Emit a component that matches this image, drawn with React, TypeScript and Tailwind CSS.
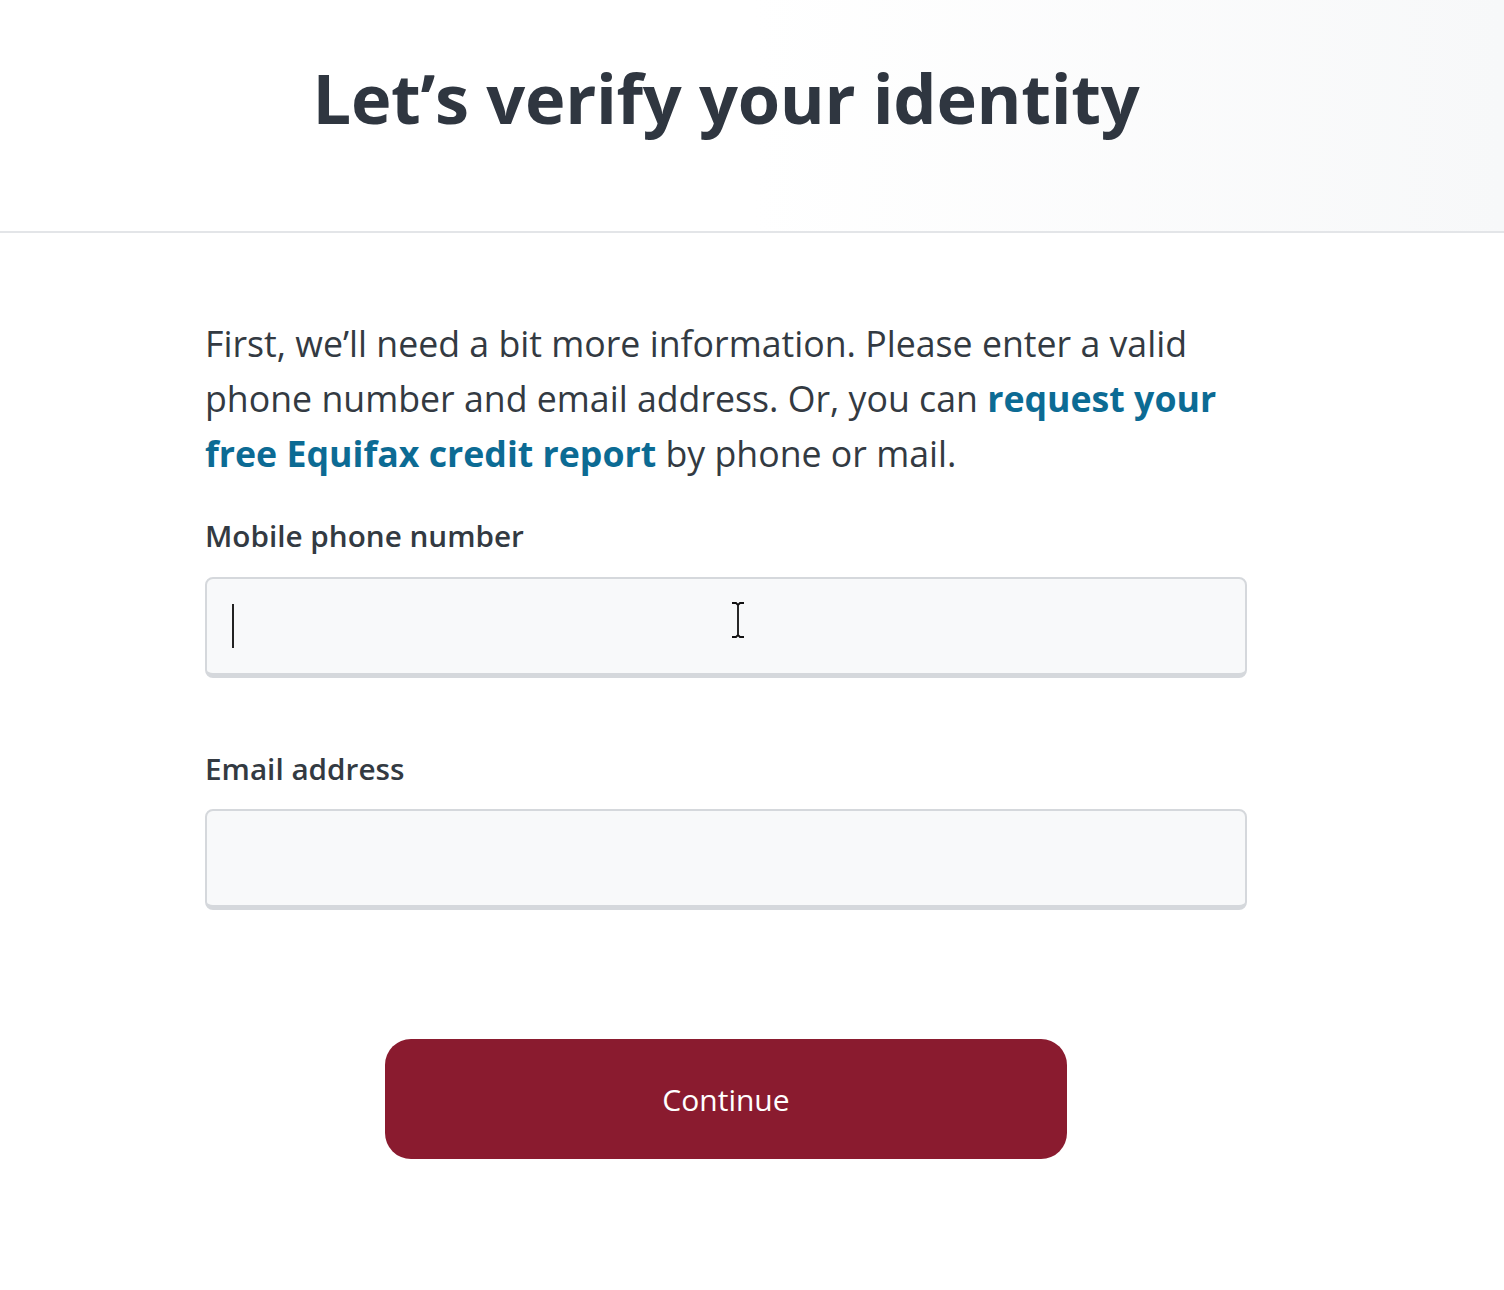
import React from "react";

const font = { fontFamily: '"Open Sans", "Noto Sans", sans-serif' };

function Field({ label, caret }: { label: string; caret?: boolean }) {
  return (
    <div>
      <label className="block text-[29.7px] font-semibold leading-none text-[#333a42]">{label}</label>
      <div className="relative mt-[26px] h-[101px] rounded-[8px] border-2 border-b-[5px] border-[#d5d8dc] bg-[#f8f9fa]">
        {caret && <span className="absolute left-[25px] top-[25px] h-[44px] w-[2px] bg-[#222]" />}
        {caret && (
          <svg className="absolute left-[524px] top-[23px]" width="14" height="36" viewBox="0 0 14 36">
            <path d="M1 1h4l2 2 2-2h4M7 3v30M1 35h4l2-2 2 2h4" fill="none" stroke="#111" strokeWidth="1.8" />
          </svg>
        )}
      </div>
    </div>
  );
}

export default function App() {
  return (
    <div className="min-h-[1290px] bg-white" style={font}>
      <header className="h-[233px] border-b-2 border-[#e3e5e8] bg-gradient-to-r from-white via-white to-[#f7f8f9]">
        <div className="w-[1452px] pt-[58px] text-center">
          <h1 className="text-[68.5px] font-bold leading-[80px] tracking-[-0.3px] text-[#2f3640]">Let’s verify your identity</h1>
        </div>
      </header>
      <main className="ml-[205px] w-[1042px] pt-[83px]">
        <p className="w-[1036px] text-[35.7px] leading-[55px] text-[#333a42]">
          First, we’ll need a bit more information. Please enter a valid phone number and email address. Or, you can{" "}
          <a className="font-bold text-[#0c6b94]">request your free Equifax credit report</a> by phone or mail.
        </p>
        <div className="mt-[40px]">
          <Field label="Mobile phone number" caret />
        </div>
        <div className="mt-[76px]">
          <Field label="Email address" />
        </div>
        <div className="mt-[129px] flex justify-center">
          <button className="h-[120px] w-[682px] rounded-[26px] bg-[#8a1b2f] text-[30px] text-white">Continue</button>
        </div>
      </main>
    </div>
  );
}
